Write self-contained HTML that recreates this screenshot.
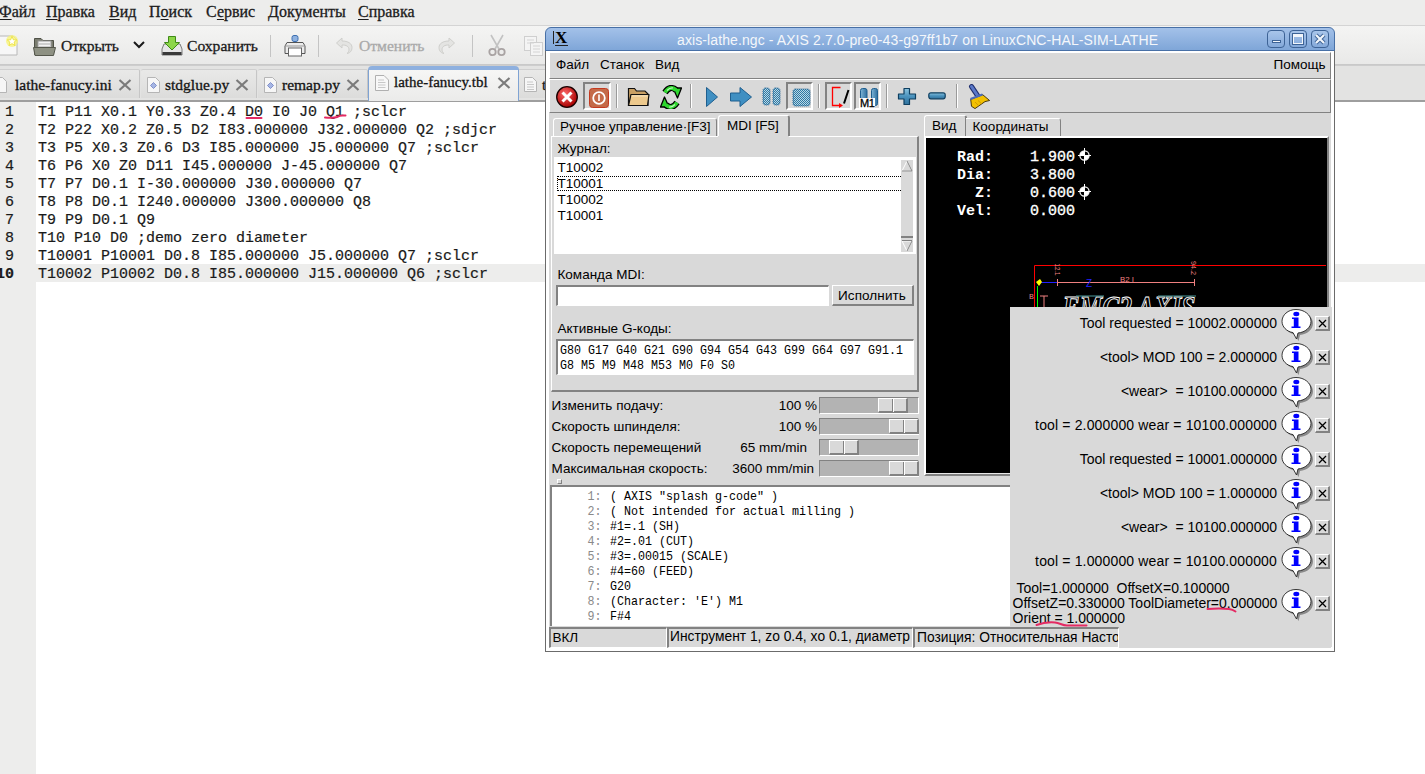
<!DOCTYPE html>
<html><head><meta charset="utf-8">
<style>
*{margin:0;padding:0;box-sizing:border-box}
html,body{width:1425px;height:774px;overflow:hidden;background:#fff}
body{position:relative}
.t{position:absolute;white-space:pre}
.r{position:absolute}
u{text-decoration:underline;text-underline-offset:2px;text-decoration-thickness:1px}
</style></head><body>

<div class="r" style="left:0px;top:0px;width:1425px;height:25px;background:#ededec"></div>
<div class="t" style="left:-1px;top:3.60px;font-family:'Liberation Serif',serif;font-size:16px;line-height:16px;color:#1c1c1c;font-weight:400;;-webkit-text-stroke:0.3px currentColor"><u>Ф</u>айл</div>
<div class="t" style="left:46px;top:3.60px;font-family:'Liberation Serif',serif;font-size:16px;line-height:16px;color:#1c1c1c;font-weight:400;;-webkit-text-stroke:0.3px currentColor"><u>П</u>равка</div>
<div class="t" style="left:109px;top:3.60px;font-family:'Liberation Serif',serif;font-size:16px;line-height:16px;color:#1c1c1c;font-weight:400;;-webkit-text-stroke:0.3px currentColor"><u>В</u>ид</div>
<div class="t" style="left:149px;top:3.60px;font-family:'Liberation Serif',serif;font-size:16px;line-height:16px;color:#1c1c1c;font-weight:400;;-webkit-text-stroke:0.3px currentColor">П<u>о</u>иск</div>
<div class="t" style="left:206px;top:3.60px;font-family:'Liberation Serif',serif;font-size:16px;line-height:16px;color:#1c1c1c;font-weight:400;;-webkit-text-stroke:0.3px currentColor">С<u>е</u>рвис</div>
<div class="t" style="left:268px;top:3.60px;font-family:'Liberation Serif',serif;font-size:16px;line-height:16px;color:#1c1c1c;font-weight:400;;-webkit-text-stroke:0.3px currentColor"><u>Д</u>окументы</div>
<div class="t" style="left:358px;top:3.60px;font-family:'Liberation Serif',serif;font-size:16px;line-height:16px;color:#1c1c1c;font-weight:400;;-webkit-text-stroke:0.3px currentColor"><u>С</u>правка</div>
<div class="r" style="left:0px;top:25px;width:1425px;height:40px;background:linear-gradient(#f4f4f3,#e9e9e8);border-top:1px solid #d4d4d4;border-bottom:1px solid #c9c9c9"></div>
<svg class="r" style="left:0px;top:34px;" width="20" height="24" viewBox="0 0 20 24"><path d="M-2 2 H13 L17 6 V21 H-2 Z" fill="#f7f7f7" stroke="#b8b8b8"/><circle cx="12" cy="7" r="6" fill="#f6f27a" opacity="0.8"/><path d="M12 2.5 L13.3 5.8 L16.6 6 L14 8.2 L14.9 11.5 L12 9.6 L9.1 11.5 L10 8.2 L7.4 6 L10.7 5.8 Z" fill="#fff" stroke="#e8d800" stroke-width="0.6"/></svg>
<svg class="r" style="left:33px;top:35px;" width="24" height="22" viewBox="0 0 24 22"><path d="M1.5 3.5 H8 L10 5.5 H20.5 V19.5 H1.5 Z" fill="#7b7d70" stroke="#4f5147"/><rect x="5" y="6" width="13" height="9" fill="#f2f2f2" stroke="#9a9a9a"/><path d="M6 9H17M6 12H17" stroke="#aaa"/><path d="M0.5 12.5 H22.5 L20.5 20.5 H2 Z" fill="#8e9183" stroke="#55574c"/></svg>
<div class="t" style="left:61px;top:37.94px;font-family:'Liberation Serif',serif;font-size:15.6px;line-height:15.6px;color:#1a1a1a;font-weight:400;;-webkit-text-stroke:0.3px currentColor">Открыть</div>
<svg class="r" style="left:132px;top:40px;" width="14" height="10" viewBox="0 0 14 10"><path d="M2 2 L7 7 L12 2" fill="none" stroke="#1a1a1a" stroke-width="2"/></svg>
<svg class="r" style="left:160px;top:35px;" width="24" height="23" viewBox="0 0 24 23"><path d="M2 14 L4 9 H20 L22 14 V20 H2 Z" fill="#e6e6e6" stroke="#7a7a7a"/><rect x="2.5" y="17" width="19" height="3" fill="#3a3a3a"/><path d="M8.5 1.5 H15.5 V7.5 H19.5 L12 15 L4.5 7.5 H8.5 Z" fill="#8cd648" stroke="#3f8a17"/></svg>
<div class="t" style="left:187px;top:37.94px;font-family:'Liberation Serif',serif;font-size:15.6px;line-height:15.6px;color:#1a1a1a;font-weight:400;;-webkit-text-stroke:0.3px currentColor">Сохранить</div>
<div class="r" style="left:270px;top:35px;width:1px;height:22px;background:#c4c4c4"></div>
<svg class="r" style="left:283px;top:34px;" width="24" height="24" viewBox="0 0 24 24"><rect x="9" y="1.5" width="6" height="6" rx="2" fill="#8fb2e0" stroke="#3c6fb0"/><path d="M4 8.5 H20 L22 12 V19.5 H2 V12 Z" fill="#ececec" stroke="#555"/><rect x="5.5" y="14" width="13" height="8" fill="#fff" stroke="#666"/><path d="M2 12 H22" stroke="#999"/></svg>
<div class="r" style="left:318px;top:35px;width:1px;height:22px;background:#c4c4c4"></div>
<svg class="r" style="left:335px;top:36px;" width="18" height="18" viewBox="0 0 18 18"><path d="M7 2 L1.5 7 L7 12 V9 C11 9 14 10 14 14 C14 15.5 13 17 12 17.5 C16 17 17 13.5 17 11.5 C17 7.5 13 5 7 5 Z" fill="#e4e4e2" stroke="#cfcfcc"/></svg>
<div class="t" style="left:359px;top:37.94px;font-family:'Liberation Serif',serif;font-size:15.6px;line-height:15.6px;color:#a9a9a9;font-weight:400;;-webkit-text-stroke:0.3px currentColor">Отменить</div>
<svg class="r" style="left:438px;top:36px;" width="18" height="18" viewBox="0 0 18 18"><path d="M11 2 L16.5 7 L11 12 V9 C7 9 4 10 4 14 C4 15.5 5 17 6 17.5 C2 17 1 13.5 1 11.5 C1 7.5 5 5 11 5 Z" fill="#e4e4e2" stroke="#cfcfcc"/></svg>
<div class="r" style="left:472px;top:35px;width:1px;height:22px;background:#c4c4c4"></div>
<svg class="r" style="left:487px;top:34px;" width="20" height="23" viewBox="0 0 20 23"><path d="M4 1 L12 15 M16 1 L8 15" stroke="#c2c2c2" stroke-width="1.6" fill="none"/><circle cx="5.5" cy="18" r="3.2" fill="none" stroke="#a9a3a3" stroke-width="1.8"/><circle cx="14.5" cy="18" r="3.2" fill="none" stroke="#a9a3a3" stroke-width="1.8"/></svg>
<svg class="r" style="left:523px;top:35px;" width="22" height="22" viewBox="0 0 22 22"><rect x="1.5" y="1.5" width="12" height="14" fill="#f4f4f4" stroke="#cfcfcf"/><rect x="7.5" y="7.5" width="12" height="13" fill="#f4f4f4" stroke="#cfcfcf"/><path d="M4 5H11M4 8H11M10 11H17M10 14H17M10 17H17" stroke="#d4d4d4"/></svg>
<div class="r" style="left:0px;top:65px;width:1425px;height:37px;background:#e3e3e2;border-top:1px solid #cdcdcd"></div>
<div class="r" style="left:0px;top:100px;width:1425px;height:2px;background:#9e9e9e"></div>
<div class="r" style="left:-12px;top:69px;width:152px;height:29px;background:linear-gradient(#e9e9e8,#dcdcdb);border-top:1px solid #cfcfcf;border-right:1px solid #c6c6c6;border-radius:2px 2px 0 0"></div>
<svg class="r" style="left:-6px;top:77px;" width="13" height="16" viewBox="0 0 13 16"><path d="M0.5 0.5 H8.5 L12.5 4.5 V15.5 H0.5 Z" fill="#f6f6f6" stroke="#b5b5b5"/></svg>
<div class="t" style="left:15px;top:76.52px;font-family:'Liberation Serif',serif;font-size:15.5px;line-height:15.5px;color:#141414;font-weight:400;;-webkit-text-stroke:0.3px currentColor">lathe-fanucy.ini</div>
<svg class="r" style="left:118px;top:79px;" width="14" height="12" viewBox="0 0 14 12"><path d="M1.5 1 L12.5 11 M12.5 1 L1.5 11" stroke="#7b7b7b" stroke-width="2.2"/></svg>
<div class="r" style="left:141px;top:69px;width:116px;height:29px;background:linear-gradient(#e9e9e8,#dcdcdb);border-top:1px solid #cfcfcf;border-right:1px solid #c6c6c6;border-radius:2px 2px 0 0"></div>
<svg class="r" style="left:147px;top:77px;" width="13" height="16" viewBox="0 0 13 16"><path d="M0.5 0.5 H8.5 L12.5 4.5 V15.5 H0.5 Z" fill="#f6f6f6" stroke="#b5b5b5"/><path d="M6.5 5.5 L9.5 8.5 L6.5 11.5 L3.5 8.5 Z" fill="#a6b6e4" stroke="#6f7fc0" stroke-width="0.8"/></svg>
<div class="t" style="left:165px;top:76.52px;font-family:'Liberation Serif',serif;font-size:15.5px;line-height:15.5px;color:#141414;font-weight:400;;-webkit-text-stroke:0.3px currentColor">stdglue.py</div>
<svg class="r" style="left:235px;top:79px;" width="14" height="12" viewBox="0 0 14 12"><path d="M1.5 1 L12.5 11 M12.5 1 L1.5 11" stroke="#7b7b7b" stroke-width="2.2"/></svg>
<div class="r" style="left:258px;top:69px;width:110px;height:29px;background:linear-gradient(#e9e9e8,#dcdcdb);border-top:1px solid #cfcfcf;border-right:1px solid #c6c6c6;border-radius:2px 2px 0 0"></div>
<svg class="r" style="left:264px;top:77px;" width="13" height="16" viewBox="0 0 13 16"><path d="M0.5 0.5 H8.5 L12.5 4.5 V15.5 H0.5 Z" fill="#f6f6f6" stroke="#b5b5b5"/><path d="M6.5 5.5 L9.5 8.5 L6.5 11.5 L3.5 8.5 Z" fill="#a6b6e4" stroke="#6f7fc0" stroke-width="0.8"/></svg>
<div class="t" style="left:282px;top:76.52px;font-family:'Liberation Serif',serif;font-size:15.5px;line-height:15.5px;color:#141414;font-weight:400;;-webkit-text-stroke:0.3px currentColor">remap.py</div>
<svg class="r" style="left:346px;top:79px;" width="14" height="12" viewBox="0 0 14 12"><path d="M1.5 1 L12.5 11 M12.5 1 L1.5 11" stroke="#7b7b7b" stroke-width="2.2"/></svg>
<div class="r" style="left:519px;top:69px;width:40px;height:29px;background:linear-gradient(#e9e9e8,#dcdcdb);border-top:1px solid #cfcfcf"></div>
<svg class="r" style="left:524px;top:77px;" width="13" height="15" viewBox="0 0 13 15"><path d="M0.5 0.5 H8.5 L12.5 4.5 V14.5 H0.5 Z" fill="#f6f6f6" stroke="#b5b5b5"/><path d="M3 5H9M3 7.5H10M3 10H10M3 12.5H10" stroke="#c8c8c8"/></svg>
<div class="t" style="left:542px;top:76.52px;font-family:'Liberation Serif',serif;font-size:15.5px;line-height:15.5px;color:#141414;font-weight:400;;-webkit-text-stroke:0.3px currentColor">t</div>
<div class="r" style="left:368px;top:66px;width:151px;height:35px;background:linear-gradient(#f6f6f5,#ebebea);border:1px solid #7fa3d3;border-bottom:none;border-top:4px solid #8eb0df;border-radius:4px 4px 0 0"></div>
<svg class="r" style="left:375px;top:75px;" width="14" height="16" viewBox="0 0 14 16"><path d="M0.5 0.5 H9 L13.5 5 V15.5 H0.5 Z" fill="#f8f8f8" stroke="#b0b0b0"/><path d="M3 5H9M3 7.5H10.5M3 10H10.5M3 12.5H10.5" stroke="#c8c8c8"/></svg>
<div class="t" style="left:394px;top:75.44px;font-family:'Liberation Serif',serif;font-size:15px;line-height:15px;color:#141414;font-weight:400;;-webkit-text-stroke:0.3px currentColor">lathe-fanucy.tbl</div>
<svg class="r" style="left:497px;top:77px;" width="14" height="12" viewBox="0 0 14 12"><path d="M1.5 1 L12.5 11 M12.5 1 L1.5 11" stroke="#7b7b7b" stroke-width="2.2"/></svg>
<div class="r" style="left:0px;top:102px;width:36px;height:672px;background:#ededec"></div>
<div class="r" style="left:36px;top:264px;width:1389px;height:18px;background:#ededec"></div>
<div class="t" style="right:1411px;top:104.50px;font-family:'Liberation Mono',monospace;font-size:15px;line-height:15px;color:#1a1a1a;font-weight:400;-webkit-text-stroke:0.2px #1a1a1a">1</div>
<div class="t" style="left:38px;top:104.50px;font-family:'Liberation Mono',monospace;font-size:15px;line-height:15px;color:#1a1a1a;font-weight:400;-webkit-text-stroke:0.2px #1a1a1a">T1 P11 X0.1 Y0.33 Z0.4 D0 I0 J0 Q1 ;sclcr</div>
<div class="t" style="right:1411px;top:122.50px;font-family:'Liberation Mono',monospace;font-size:15px;line-height:15px;color:#1a1a1a;font-weight:400;-webkit-text-stroke:0.2px #1a1a1a">2</div>
<div class="t" style="left:38px;top:122.50px;font-family:'Liberation Mono',monospace;font-size:15px;line-height:15px;color:#1a1a1a;font-weight:400;-webkit-text-stroke:0.2px #1a1a1a">T2 P22 X0.2 Z0.5 D2 I83.000000 J32.000000 Q2 ;sdjcr</div>
<div class="t" style="right:1411px;top:140.50px;font-family:'Liberation Mono',monospace;font-size:15px;line-height:15px;color:#1a1a1a;font-weight:400;-webkit-text-stroke:0.2px #1a1a1a">3</div>
<div class="t" style="left:38px;top:140.50px;font-family:'Liberation Mono',monospace;font-size:15px;line-height:15px;color:#1a1a1a;font-weight:400;-webkit-text-stroke:0.2px #1a1a1a">T3 P5 X0.3 Z0.6 D3 I85.000000 J5.000000 Q7 ;sclcr</div>
<div class="t" style="right:1411px;top:158.50px;font-family:'Liberation Mono',monospace;font-size:15px;line-height:15px;color:#1a1a1a;font-weight:400;-webkit-text-stroke:0.2px #1a1a1a">4</div>
<div class="t" style="left:38px;top:158.50px;font-family:'Liberation Mono',monospace;font-size:15px;line-height:15px;color:#1a1a1a;font-weight:400;-webkit-text-stroke:0.2px #1a1a1a">T6 P6 X0 Z0 D11 I45.000000 J-45.000000 Q7</div>
<div class="t" style="right:1411px;top:176.50px;font-family:'Liberation Mono',monospace;font-size:15px;line-height:15px;color:#1a1a1a;font-weight:400;-webkit-text-stroke:0.2px #1a1a1a">5</div>
<div class="t" style="left:38px;top:176.50px;font-family:'Liberation Mono',monospace;font-size:15px;line-height:15px;color:#1a1a1a;font-weight:400;-webkit-text-stroke:0.2px #1a1a1a">T7 P7 D0.1 I-30.000000 J30.000000 Q7</div>
<div class="t" style="right:1411px;top:194.50px;font-family:'Liberation Mono',monospace;font-size:15px;line-height:15px;color:#1a1a1a;font-weight:400;-webkit-text-stroke:0.2px #1a1a1a">6</div>
<div class="t" style="left:38px;top:194.50px;font-family:'Liberation Mono',monospace;font-size:15px;line-height:15px;color:#1a1a1a;font-weight:400;-webkit-text-stroke:0.2px #1a1a1a">T8 P8 D0.1 I240.000000 J300.000000 Q8</div>
<div class="t" style="right:1411px;top:212.50px;font-family:'Liberation Mono',monospace;font-size:15px;line-height:15px;color:#1a1a1a;font-weight:400;-webkit-text-stroke:0.2px #1a1a1a">7</div>
<div class="t" style="left:38px;top:212.50px;font-family:'Liberation Mono',monospace;font-size:15px;line-height:15px;color:#1a1a1a;font-weight:400;-webkit-text-stroke:0.2px #1a1a1a">T9 P9 D0.1 Q9</div>
<div class="t" style="right:1411px;top:230.50px;font-family:'Liberation Mono',monospace;font-size:15px;line-height:15px;color:#1a1a1a;font-weight:400;-webkit-text-stroke:0.2px #1a1a1a">8</div>
<div class="t" style="left:38px;top:230.50px;font-family:'Liberation Mono',monospace;font-size:15px;line-height:15px;color:#1a1a1a;font-weight:400;-webkit-text-stroke:0.2px #1a1a1a">T10 P10 D0 ;demo zero diameter</div>
<div class="t" style="right:1411px;top:248.50px;font-family:'Liberation Mono',monospace;font-size:15px;line-height:15px;color:#1a1a1a;font-weight:400;-webkit-text-stroke:0.2px #1a1a1a">9</div>
<div class="t" style="left:38px;top:248.50px;font-family:'Liberation Mono',monospace;font-size:15px;line-height:15px;color:#1a1a1a;font-weight:400;-webkit-text-stroke:0.2px #1a1a1a">T10001 P10001 D0.8 I85.000000 J5.000000 Q7 ;sclcr</div>
<div class="t" style="right:1411px;top:266.50px;font-family:'Liberation Mono',monospace;font-size:15px;line-height:15px;color:#1a1a1a;font-weight:700;-webkit-text-stroke:0.2px #1a1a1a">10</div>
<div class="t" style="left:38px;top:266.50px;font-family:'Liberation Mono',monospace;font-size:15px;line-height:15px;color:#1a1a1a;font-weight:400;-webkit-text-stroke:0.2px #1a1a1a">T10002 P10002 D0.8 I85.000000 J15.000000 Q6 ;sclcr</div>
<svg class="r" style="left:244px;top:115px;" width="22" height="6" viewBox="0 0 22 6"><path d="M2.5 3 H17.5" stroke="#e42a63" stroke-width="2" stroke-linecap="round"/></svg>
<svg class="r" style="left:322px;top:112px;" width="26" height="8" viewBox="0 0 26 8"><path d="M3 5.5 C8 6 12 6 15 5 C17 4 19 3.5 21 3.6 C22 3.7 23 3.5 23.5 3.5" stroke="#e42a63" stroke-width="2" stroke-linecap="round" fill="none"/></svg>
<div class="r" style="left:545px;top:50px;width:790px;height:602px;background:#fff;border:1px solid #6b6b6b;border-top:none"></div>
<div class="r" style="left:549px;top:52px;width:782px;height:596px;background:#d9d9d9"></div>
<div class="r" style="left:545px;top:27px;width:790px;height:24px;background:linear-gradient(#a3c1e9,#7fa6d8);border:1px solid #4870a6;border-radius:6px 6px 0 0"></div>
<div class="t" style="left:555px;top:30px;font-family:'Liberation Serif',serif;font-weight:700;font-size:17px;line-height:15px;color:#000">X</div>
<div class="r" style="left:553px;top:31px;width:1px;height:13px;background:#222"></div>
<div class="r" style="left:555px;top:45px;width:13px;height:1px;background:#222"></div>
<div class="t" style="left:677px;top:32.65px;font-family:'Liberation Sans',sans-serif;font-size:14px;line-height:14px;color:#f4f7fb;font-weight:400;letter-spacing:0.1px">axis-lathe.ngc - AXIS 2.7.0-pre0-43-g97ff1b7 on LinuxCNC-HAL-SIM-LATHE</div>
<div class="r" style="left:1267px;top:30px;width:18px;height:18px;border:1px solid #3d6396;border-radius:4px;background:linear-gradient(#a8c5ea,#84a9da)"></div>
<div class="r" style="left:1289px;top:30px;width:18px;height:18px;border:1px solid #3d6396;border-radius:4px;background:linear-gradient(#a8c5ea,#84a9da)"></div>
<div class="r" style="left:1311px;top:30px;width:18px;height:18px;border:1px solid #3d6396;border-radius:4px;background:linear-gradient(#a8c5ea,#84a9da)"></div>
<div class="r" style="left:1272px;top:40px;width:9px;height:3px;background:#f2f6fb;border:1px solid #3d6396"></div>
<div class="r" style="left:1293px;top:34px;width:10px;height:10px;border-style:solid;border-color:#f2f6fb;border-width:3px 1px 1px 1px;outline:1px solid #3d6396;background:transparent"></div>
<svg class="r" style="left:1313px;top:32px;" width="14" height="14" viewBox="0 0 14 14"><path d="M3 3 L11 11 M11 3 L3 11" stroke="#3d6396" stroke-width="4"/><path d="M3 3 L11 11 M11 3 L3 11" stroke="#f2f6fb" stroke-width="2.2"/></svg>
<div class="r" style="left:549px;top:52px;width:782px;height:27px;background:#d9d9d9;border-style:solid;border-width:1px;border-color:#fff #828282 #828282 #fff"></div>
<div class="t" style="left:556px;top:57.57px;font-family:'Liberation Sans',sans-serif;font-size:13.5px;line-height:13.5px;color:#000;font-weight:400;">Файл</div>
<div class="t" style="left:600px;top:57.57px;font-family:'Liberation Sans',sans-serif;font-size:13.5px;line-height:13.5px;color:#000;font-weight:400;">Станок</div>
<div class="t" style="left:655px;top:57.57px;font-family:'Liberation Sans',sans-serif;font-size:13.5px;line-height:13.5px;color:#000;font-weight:400;">Вид</div>
<div class="t" style="left:1273.5px;top:58.07px;font-family:'Liberation Sans',sans-serif;font-size:13.5px;line-height:13.5px;color:#000;font-weight:400;">Помощь</div>
<div class="r" style="left:549px;top:79px;width:782px;height:34px;background:#d9d9d9;border-style:solid;border-width:1px;border-color:#fff #828282 #828282 #fff"></div>
<div class="r" style="left:583px;top:82px;width:28px;height:28px;border-style:solid;border-width:2px;border-color:#828282 #fff #fff #828282"></div>
<div class="r" style="left:786px;top:82px;width:27px;height:28px;border-style:solid;border-width:2px;border-color:#828282 #fff #fff #828282"></div>
<div class="r" style="left:825px;top:82px;width:27px;height:28px;border-style:solid;border-width:2px;border-color:#828282 #fff #fff #828282"></div>
<div class="r" style="left:854px;top:82px;width:27px;height:28px;border-style:solid;border-width:2px;border-color:#828282 #fff #fff #828282"></div>
<div class="r" style="left:616px;top:84px;width:1px;height:24px;background:#9a9a9a;box-shadow:1px 0 0 #fff"></div>
<div class="r" style="left:690px;top:84px;width:1px;height:24px;background:#9a9a9a;box-shadow:1px 0 0 #fff"></div>
<div class="r" style="left:818px;top:84px;width:1px;height:24px;background:#9a9a9a;box-shadow:1px 0 0 #fff"></div>
<div class="r" style="left:886px;top:84px;width:1px;height:24px;background:#9a9a9a;box-shadow:1px 0 0 #fff"></div>
<div class="r" style="left:956px;top:84px;width:1px;height:24px;background:#9a9a9a;box-shadow:1px 0 0 #fff"></div>
<svg class="r" style="left:556px;top:86px;" width="22" height="22" viewBox="0 0 22 22"><defs><radialGradient id="rg" cx="40%" cy="35%" r="65%"><stop offset="0" stop-color="#ff6b6b"/><stop offset="1" stop-color="#a80000"/></radialGradient></defs><circle cx="11" cy="11" r="10.3" fill="url(#rg)" stroke="#1a0000" stroke-width="1.3"/><path d="M6.5 6.5 L15.5 15.5 M15.5 6.5 L6.5 15.5" stroke="#fff" stroke-width="3"/></svg>
<svg class="r" style="left:589px;top:88px;" width="20" height="20" viewBox="0 0 20 20"><rect x="0.5" y="0.5" width="19" height="19" rx="3" fill="#c46a48" stroke="#c43a20"/><circle cx="10" cy="10" r="5.8" fill="none" stroke="#fff" stroke-width="1.8"/><path d="M10 6.5 V13" stroke="#fff" stroke-width="1.6"/></svg>
<svg class="r" style="left:627px;top:87px;" width="24" height="20" viewBox="0 0 24 20"><path d="M1.5 1.5 H7.5 L9.5 4 H18 L21 7 V18.5 H1.5 Z" fill="#c9a064" stroke="#111" stroke-width="1.2"/><path d="M4 7.5 H22 L20.5 18.5 H1.5 Z" fill="#edc98d" stroke="#111" stroke-width="1.2" stroke-linejoin="round"/><path d="M4.5 9 H20.5" stroke="#f8e6c4" stroke-width="1"/></svg>
<svg class="r" style="left:660px;top:85px;" width="22" height="24" viewBox="0 0 22 24"><g><path d="M5 7.5 Q10 0 16 5" stroke="#000" stroke-width="6.2" fill="none"/><path d="M13 3 L21.5 3 L17.5 13 Z" fill="#2fd82f" stroke="#000" stroke-width="1.3" stroke-linejoin="round"/><path d="M5 7.5 Q10 0 16 5" stroke="#2fd82f" stroke-width="3.8" fill="none"/><path d="M7 5.5 Q10 2.5 13 3" stroke="#b8f5b8" stroke-width="1.2" fill="none"/></g><g transform="rotate(180 11 12.5)"><path d="M5 7.5 Q10 0 16 5" stroke="#000" stroke-width="6.2" fill="none"/><path d="M13 3 L21.5 3 L17.5 13 Z" fill="#2fd82f" stroke="#000" stroke-width="1.3" stroke-linejoin="round"/><path d="M5 7.5 Q10 0 16 5" stroke="#2fd82f" stroke-width="3.8" fill="none"/><path d="M7 5.5 Q10 2.5 13 3" stroke="#b8f5b8" stroke-width="1.2" fill="none"/></g></svg>
<svg class="r" style="left:705px;top:86px;" width="14" height="22" viewBox="0 0 14 22"><path d="M1.5 1.5 L12.5 11 L1.5 20.5 Z" fill="#3f8fc2" stroke="#1f5f8f"/></svg>
<svg class="r" style="left:729px;top:86px;" width="24" height="22" viewBox="0 0 24 22"><path d="M1.5 7 H11 V1.5 L22.5 11 L11 20.5 V15 H1.5 Z" fill="#3f8fc2" stroke="#1f5f8f"/></svg>
<svg class="r" style="left:762px;top:87px;" width="19" height="19" viewBox="0 0 19 19"><defs><pattern id="dp" width="2" height="2" patternUnits="userSpaceOnUse"><rect width="2" height="2" fill="#b9d9e6"/><rect width="1" height="1" fill="#2f77a3"/><rect x="1" y="1" width="1" height="1" fill="#2f77a3"/></pattern></defs><rect x="1" y="1" width="7" height="17" rx="2.5" fill="url(#dp)" stroke="#1f5f8f" stroke-dasharray="1 1"/><rect x="11" y="1" width="7" height="17" rx="2.5" fill="url(#dp)" stroke="#1f5f8f" stroke-dasharray="1 1"/></svg>
<svg class="r" style="left:792px;top:88px;" width="19" height="19" viewBox="0 0 19 19"><rect x="1" y="1" width="17" height="17" rx="2.5" fill="url(#dp)" stroke="#1f5f8f" stroke-dasharray="1 1"/></svg>
<svg class="r" style="left:826px;top:84px;" width="24" height="24" viewBox="0 0 24 24"><path d="M14.5 3.5 H6.5 V21.5 H14" stroke="#ff0000" stroke-width="1.3" fill="none"/><path d="M13 19 L17 21.5 L13 24 Z" fill="#f00"/><path d="M22.5 6 L18 19.5" stroke="#000" stroke-width="2"/></svg>
<svg class="r" style="left:857px;top:84px;" width="22" height="24" viewBox="0 0 22 24"><defs><linearGradient id="bg1" x1="0" x2="1"><stop offset="0" stop-color="#7fb5d6"/><stop offset="1" stop-color="#2f6f9f"/></linearGradient></defs><rect x="3.5" y="4.5" width="6.5" height="17" rx="2" fill="url(#bg1)" stroke="#1f5f8f"/><rect x="14.5" y="4.5" width="6" height="17" rx="2" fill="url(#bg1)" stroke="#1f5f8f"/></svg>
<div class="t" style="left:859px;top:97.5px;font-family:'Liberation Sans',sans-serif;font-size:11px;line-height:10px;font-weight:400;background:#fff;padding:0 0 0 1px;letter-spacing:-0.3px;-webkit-text-stroke:0.3px #000">M1</div>
<svg class="r" style="left:897px;top:87px;" width="20" height="19" viewBox="0 0 20 19"><defs><linearGradient id="bl" x1="0" y1="0" x2="0" y2="1"><stop offset="0" stop-color="#8cc4df"/><stop offset="0.5" stop-color="#4a92bd"/><stop offset="1" stop-color="#2f719c"/></linearGradient></defs><path d="M7 1.5 H12.5 V7 H18.5 V12 H12.5 V17.5 H7 V12 H1.5 V7 H7 Z" fill="url(#bl)" stroke="#0f3f60" stroke-width="1.2" stroke-linejoin="round"/></svg>
<svg class="r" style="left:928px;top:92px;" width="20" height="8" viewBox="0 0 20 8"><rect x="0.8" y="0.8" width="16.4" height="6" rx="2" fill="url(#bl)" stroke="#0f3f60" stroke-width="1.2"/></svg>
<svg class="r" style="left:968px;top:84px;" width="24" height="26" viewBox="0 0 24 26"><path d="M3.5 2.5 L9.5 11.5" stroke="#1f2f6f" stroke-width="5" stroke-linecap="round"/><path d="M3.5 2.5 L9.5 11.5" stroke="#5a78c8" stroke-width="3" stroke-linecap="round"/><path d="M2.7 15.3 L14.7 10.7 L21.6 16.5 L17 17.6 L7 24.6 L3.5 22.3 Z" fill="#f2c000" stroke="#3a2a00" stroke-width="0.9" stroke-linejoin="round"/><path d="M2.5 15 L14.5 10.5" stroke="#4a6ab8" stroke-width="2"/><path d="M7 18 L11 22 M10 16.5 L14 20" stroke="#c89000" stroke-width="0.8"/></svg>
<div class="r" style="left:553px;top:118px;width:164px;height:18px;background:#d9d9d9;border-style:solid;border-width:1px 1px 0 1px;border-color:#fff #828282 #fff #fff;border-radius:3px 3px 0 0"></div>
<div class="t" style="left:560px;top:120.07px;font-family:'Liberation Sans',sans-serif;font-size:13.5px;line-height:13.5px;color:#000;font-weight:400;">Ручное управление·[F3]</div>
<div class="r" style="left:718px;top:115px;width:72px;height:22px;background:#d9d9d9;border-style:solid;border-width:1px 2px 0 1px;border-color:#fff #828282 #fff #fff;border-radius:3px 3px 0 0"></div>
<div class="t" style="left:727px;top:118.57px;font-family:'Liberation Sans',sans-serif;font-size:13.5px;line-height:13.5px;color:#000;font-weight:400;">MDI [F5]</div>
<div class="r" style="left:551px;top:136px;width:368px;height:256px;border-style:solid;border-width:1px 2px 2px 1px;border-color:#fff #828282 #828282 #fff"></div>
<div class="r" style="left:718px;top:136px;width:71px;height:2px;background:#d9d9d9"></div>
<div class="t" style="left:557.5px;top:141.77px;font-family:'Liberation Sans',sans-serif;font-size:13.5px;line-height:13.5px;color:#000;font-weight:400;">Журнал:</div>
<div class="r" style="left:554px;top:157px;width:362px;height:97px;background:#fff"></div>
<div class="t" style="left:557.5px;top:160.97px;font-family:'Liberation Sans',sans-serif;font-size:13.5px;line-height:13.5px;color:#000;font-weight:400;">T10002</div>
<div class="t" style="left:557.5px;top:176.97px;font-family:'Liberation Sans',sans-serif;font-size:13.5px;line-height:13.5px;color:#000;font-weight:400;">T10001</div>
<div class="t" style="left:557.5px;top:192.97px;font-family:'Liberation Sans',sans-serif;font-size:13.5px;line-height:13.5px;color:#000;font-weight:400;">T10002</div>
<div class="t" style="left:557.5px;top:208.97px;font-family:'Liberation Sans',sans-serif;font-size:13.5px;line-height:13.5px;color:#000;font-weight:400;">T10001</div>
<div class="r" style="left:557px;top:176px;width:344px;height:15px;border-top:1px dotted #000;border-bottom:1px dotted #000"></div>
<div class="r" style="left:557px;top:176px;width:1px;height:15px;border-left:1px dotted #000"></div>
<div class="r" style="left:901px;top:160px;width:12px;height:92px;background:#d9d9d9"></div>
<svg class="r" style="left:901px;top:160px;" width="12" height="12" viewBox="0 0 12 12"><path d="M6 1 L11 11 H1 Z" fill="#d9d9d9" stroke="#fff"/><path d="M1 11 H11 L6 1" fill="none" stroke="#828282"/></svg>
<svg class="r" style="left:901px;top:240px;" width="12" height="12" viewBox="0 0 12 12"><path d="M6 11 L11 1 H1 Z" fill="#d9d9d9" stroke="#fff"/><path d="M6 11 L11 1" fill="none" stroke="#828282"/><path d="M1 0.5 H11" stroke="#828282"/></svg>
<div class="r" style="left:901px;top:236px;width:12px;height:2px;background:#828282"></div>
<div class="t" style="left:557.5px;top:268.07px;font-family:'Liberation Sans',sans-serif;font-size:13.5px;line-height:13.5px;color:#000;font-weight:400;">Команда MDI:</div>
<div class="r" style="left:556px;top:285px;width:273px;height:21px;background:#fff;border-style:solid;border-width:2px 1px 1px 2px;border-color:#828282 #fff #fff #828282"></div>
<div class="r" style="left:832px;top:285px;width:82px;height:21px;background:#d9d9d9;border-style:solid;border-width:1px 2px 2px 1px;border-color:#fff #828282 #828282 #fff"></div>
<div class="t" style="left:838px;top:289.07px;font-family:'Liberation Sans',sans-serif;font-size:13.5px;line-height:13.5px;color:#000;font-weight:400;letter-spacing:0.1px">Исполнить</div>
<div class="t" style="left:557.5px;top:321.57px;font-family:'Liberation Sans',sans-serif;font-size:13.5px;line-height:13.5px;color:#000;font-weight:400;">Активные G-коды:</div>
<div class="r" style="left:556px;top:339px;width:358px;height:36px;background:#fff;border-style:solid;border-width:2px 1px 1px 2px;border-color:#828282 #fff #fff #828282"></div>
<div class="t" style="left:559.5px;top:344.04px;font-family:'Liberation Mono',monospace;font-size:13px;line-height:13px;color:#000;font-weight:400;;transform:scaleX(0.8974358974358975);transform-origin:left top">G80 G17 G40 G21 G90 G94 G54 G43 G99 G64 G97 G91.1</div>
<div class="t" style="left:559.5px;top:359.04px;font-family:'Liberation Mono',monospace;font-size:13px;line-height:13px;color:#000;font-weight:400;;transform:scaleX(0.8974358974358975);transform-origin:left top">G8 M5 M9 M48 M53 M0 F0 S0</div>
<div class="t" style="left:551.5px;top:399.07px;font-family:'Liberation Sans',sans-serif;font-size:13.5px;line-height:13.5px;color:#000;font-weight:400;">Изменить подачу:</div>
<div class="t" style="right:608px;top:399.07px;font-family:'Liberation Sans',sans-serif;font-size:13.5px;line-height:13.5px;color:#000;font-weight:400;">100 %</div>
<div class="r" style="left:819px;top:397px;width:100px;height:17px;background:#b3b3b3;border-style:solid;border-width:1px;border-color:#828282 #fff #fff #828282"></div>
<div class="r" style="left:878px;top:398px;width:30px;height:15px;background:#d9d9d9;border-style:solid;border-width:1px 2px 2px 1px;border-color:#fff #828282 #828282 #fff"></div>
<div class="r" style="left:892px;top:399px;width:1px;height:13px;background:#828282;box-shadow:1px 0 0 #fff"></div>
<div class="t" style="left:551.5px;top:419.77px;font-family:'Liberation Sans',sans-serif;font-size:13.5px;line-height:13.5px;color:#000;font-weight:400;">Скорость шпинделя:</div>
<div class="t" style="right:608px;top:419.77px;font-family:'Liberation Sans',sans-serif;font-size:13.5px;line-height:13.5px;color:#000;font-weight:400;">100 %</div>
<div class="r" style="left:819px;top:418px;width:100px;height:17px;background:#b3b3b3;border-style:solid;border-width:1px;border-color:#828282 #fff #fff #828282"></div>
<div class="r" style="left:889px;top:419px;width:30px;height:15px;background:#d9d9d9;border-style:solid;border-width:1px 2px 2px 1px;border-color:#fff #828282 #828282 #fff"></div>
<div class="r" style="left:903px;top:420px;width:1px;height:13px;background:#828282;box-shadow:1px 0 0 #fff"></div>
<div class="t" style="left:551.5px;top:440.57px;font-family:'Liberation Sans',sans-serif;font-size:13.5px;line-height:13.5px;color:#000;font-weight:400;">Скорость перемещений</div>
<div class="t" style="right:618px;top:440.57px;font-family:'Liberation Sans',sans-serif;font-size:13.5px;line-height:13.5px;color:#000;font-weight:400;">65 mm/min</div>
<div class="r" style="left:819px;top:439px;width:100px;height:17px;background:#b3b3b3;border-style:solid;border-width:1px;border-color:#828282 #fff #fff #828282"></div>
<div class="r" style="left:829px;top:440px;width:30px;height:15px;background:#d9d9d9;border-style:solid;border-width:1px 2px 2px 1px;border-color:#fff #828282 #828282 #fff"></div>
<div class="r" style="left:843px;top:441px;width:1px;height:13px;background:#828282;box-shadow:1px 0 0 #fff"></div>
<div class="t" style="left:551.5px;top:461.57px;font-family:'Liberation Sans',sans-serif;font-size:13.5px;line-height:13.5px;color:#000;font-weight:400;">Максимальная скорость:</div>
<div class="t" style="right:611px;top:461.57px;font-family:'Liberation Sans',sans-serif;font-size:13.5px;line-height:13.5px;color:#000;font-weight:400;">3600 mm/min</div>
<div class="r" style="left:819px;top:460px;width:100px;height:17px;background:#b3b3b3;border-style:solid;border-width:1px;border-color:#828282 #fff #fff #828282"></div>
<div class="r" style="left:889px;top:461px;width:30px;height:15px;background:#d9d9d9;border-style:solid;border-width:1px 2px 2px 1px;border-color:#fff #828282 #828282 #fff"></div>
<div class="r" style="left:903px;top:462px;width:1px;height:13px;background:#828282;box-shadow:1px 0 0 #fff"></div>
<div class="r" style="left:557px;top:479px;width:5px;height:5px;border-style:solid;border-width:1px;border-color:#fff #828282 #828282 #fff;background:#d9d9d9"></div>
<div class="r" style="left:550px;top:485px;width:470px;height:141px;background:#fff;border-style:solid;border-width:2px 0 0 2px;border-color:#828282"></div>
<div class="t" style="right:823px;top:489.54px;font-family:'Liberation Mono',monospace;font-size:13px;line-height:13px;color:#8a8a8a;font-weight:400;;transform:scaleX(0.8974358974358975);transform-origin:right top">1:</div>
<div class="t" style="left:610px;top:489.54px;font-family:'Liberation Mono',monospace;font-size:13px;line-height:13px;color:#000;font-weight:400;;transform:scaleX(0.8974358974358975);transform-origin:left top">( AXIS "splash g-code" )</div>
<div class="t" style="right:823px;top:504.54px;font-family:'Liberation Mono',monospace;font-size:13px;line-height:13px;color:#8a8a8a;font-weight:400;;transform:scaleX(0.8974358974358975);transform-origin:right top">2:</div>
<div class="t" style="left:610px;top:504.54px;font-family:'Liberation Mono',monospace;font-size:13px;line-height:13px;color:#000;font-weight:400;;transform:scaleX(0.8974358974358975);transform-origin:left top">( Not intended for actual milling )</div>
<div class="t" style="right:823px;top:519.54px;font-family:'Liberation Mono',monospace;font-size:13px;line-height:13px;color:#8a8a8a;font-weight:400;;transform:scaleX(0.8974358974358975);transform-origin:right top">3:</div>
<div class="t" style="left:610px;top:519.54px;font-family:'Liberation Mono',monospace;font-size:13px;line-height:13px;color:#000;font-weight:400;;transform:scaleX(0.8974358974358975);transform-origin:left top">#1=.1 (SH)</div>
<div class="t" style="right:823px;top:534.54px;font-family:'Liberation Mono',monospace;font-size:13px;line-height:13px;color:#8a8a8a;font-weight:400;;transform:scaleX(0.8974358974358975);transform-origin:right top">4:</div>
<div class="t" style="left:610px;top:534.54px;font-family:'Liberation Mono',monospace;font-size:13px;line-height:13px;color:#000;font-weight:400;;transform:scaleX(0.8974358974358975);transform-origin:left top">#2=.01 (CUT)</div>
<div class="t" style="right:823px;top:549.54px;font-family:'Liberation Mono',monospace;font-size:13px;line-height:13px;color:#8a8a8a;font-weight:400;;transform:scaleX(0.8974358974358975);transform-origin:right top">5:</div>
<div class="t" style="left:610px;top:549.54px;font-family:'Liberation Mono',monospace;font-size:13px;line-height:13px;color:#000;font-weight:400;;transform:scaleX(0.8974358974358975);transform-origin:left top">#3=.00015 (SCALE)</div>
<div class="t" style="right:823px;top:564.54px;font-family:'Liberation Mono',monospace;font-size:13px;line-height:13px;color:#8a8a8a;font-weight:400;;transform:scaleX(0.8974358974358975);transform-origin:right top">6:</div>
<div class="t" style="left:610px;top:564.54px;font-family:'Liberation Mono',monospace;font-size:13px;line-height:13px;color:#000;font-weight:400;;transform:scaleX(0.8974358974358975);transform-origin:left top">#4=60 (FEED)</div>
<div class="t" style="right:823px;top:579.54px;font-family:'Liberation Mono',monospace;font-size:13px;line-height:13px;color:#8a8a8a;font-weight:400;;transform:scaleX(0.8974358974358975);transform-origin:right top">7:</div>
<div class="t" style="left:610px;top:579.54px;font-family:'Liberation Mono',monospace;font-size:13px;line-height:13px;color:#000;font-weight:400;;transform:scaleX(0.8974358974358975);transform-origin:left top">G20</div>
<div class="t" style="right:823px;top:594.54px;font-family:'Liberation Mono',monospace;font-size:13px;line-height:13px;color:#8a8a8a;font-weight:400;;transform:scaleX(0.8974358974358975);transform-origin:right top">8:</div>
<div class="t" style="left:610px;top:594.54px;font-family:'Liberation Mono',monospace;font-size:13px;line-height:13px;color:#000;font-weight:400;;transform:scaleX(0.8974358974358975);transform-origin:left top">(Character: 'E') M1</div>
<div class="t" style="right:823px;top:609.54px;font-family:'Liberation Mono',monospace;font-size:13px;line-height:13px;color:#8a8a8a;font-weight:400;;transform:scaleX(0.8974358974358975);transform-origin:right top">9:</div>
<div class="t" style="left:610px;top:609.54px;font-family:'Liberation Mono',monospace;font-size:13px;line-height:13px;color:#000;font-weight:400;;transform:scaleX(0.8974358974358975);transform-origin:left top">F#4</div>
<div class="r" style="left:924px;top:115px;width:43px;height:22px;background:#d9d9d9;border-style:solid;border-width:1px 2px 0 1px;border-color:#fff #828282 #fff #fff;border-radius:3px 3px 0 0"></div>
<div class="t" style="left:932px;top:118.57px;font-family:'Liberation Sans',sans-serif;font-size:13.5px;line-height:13.5px;color:#000;font-weight:400;">Вид</div>
<div class="r" style="left:966px;top:118px;width:95px;height:19px;background:#d9d9d9;border-style:solid;border-width:1px 1px 0 0;border-color:#fff #828282 #fff #fff;border-radius:0 3px 0 0"></div>
<div class="t" style="left:972.5px;top:120.07px;font-family:'Liberation Sans',sans-serif;font-size:13.5px;line-height:13.5px;color:#000;font-weight:400;">Координаты</div>
<div class="r" style="left:924px;top:136px;width:405px;height:340px;background:#000;border-style:solid;border-width:2px;border-color:#fff #828282 #828282 #fff"></div>
<div class="r" style="left:926px;top:473px;width:401px;height:1px;background:#e8e8e8"></div>
<div class="t" style="left:957px;top:149.50px;font-family:'Liberation Mono',monospace;font-size:15px;line-height:15px;color:#fff;font-weight:700;">Rad:</div>
<div class="t" style="left:1030px;top:149.50px;font-family:'Liberation Mono',monospace;font-size:15px;line-height:15px;color:#fff;font-weight:400;-webkit-text-stroke:0.35px #fff">1.900</div>
<svg class="r" style="left:1077px;top:148px;" width="15" height="16" viewBox="0 0 15 16"><circle cx="7.5" cy="7.5" r="4.6" fill="#000" stroke="#fff" stroke-width="1.2"/><path d="M7.5 7.5 V2.9 A4.6 4.6 0 0 0 2.9 7.5 Z M7.5 7.5 V12.1 A4.6 4.6 0 0 0 12.1 7.5 Z" fill="#fff"/><path d="M7.5 0 V16 M1 7.5 H14" stroke="#fff" stroke-width="1"/></svg>
<div class="t" style="left:957px;top:167.50px;font-family:'Liberation Mono',monospace;font-size:15px;line-height:15px;color:#fff;font-weight:700;">Dia:</div>
<div class="t" style="left:1030px;top:167.50px;font-family:'Liberation Mono',monospace;font-size:15px;line-height:15px;color:#fff;font-weight:400;-webkit-text-stroke:0.35px #fff">3.800</div>
<div class="t" style="left:957px;top:185.50px;font-family:'Liberation Mono',monospace;font-size:15px;line-height:15px;color:#fff;font-weight:700;">  Z:</div>
<div class="t" style="left:1030px;top:185.50px;font-family:'Liberation Mono',monospace;font-size:15px;line-height:15px;color:#fff;font-weight:400;-webkit-text-stroke:0.35px #fff">0.600</div>
<svg class="r" style="left:1077px;top:184px;" width="15" height="16" viewBox="0 0 15 16"><circle cx="7.5" cy="7.5" r="4.6" fill="#000" stroke="#fff" stroke-width="1.2"/><path d="M7.5 7.5 V2.9 A4.6 4.6 0 0 0 2.9 7.5 Z M7.5 7.5 V12.1 A4.6 4.6 0 0 0 12.1 7.5 Z" fill="#fff"/><path d="M7.5 0 V16 M1 7.5 H14" stroke="#fff" stroke-width="1"/></svg>
<div class="t" style="left:957px;top:203.50px;font-family:'Liberation Mono',monospace;font-size:15px;line-height:15px;color:#fff;font-weight:700;">Vel:</div>
<div class="t" style="left:1030px;top:203.50px;font-family:'Liberation Mono',monospace;font-size:15px;line-height:15px;color:#fff;font-weight:400;-webkit-text-stroke:0.35px #fff">0.000</div>
<svg class="r" style="left:926px;top:138px;" width="400" height="169" viewBox="0 0 400 169">
<path d="M108.5 169 V127.5 H400" stroke="#f00" stroke-width="1" fill="none"/>
<path d="M115 144.5 H131" stroke="#2020ff" stroke-width="1"/>
<path d="M131 144.5 H268.5 M131.5 141 V148 M268.5 141 V148" stroke="#f08080" stroke-width="1"/>
<path d="M111.5 148 V169" stroke="#00ff00" stroke-width="1"/>
<path d="M110 144 L114 141 L116 144 L113 148 Z" fill="#ffff00"/>
<text transform="translate(129,125.5) rotate(90)" font-family="Liberation Sans" font-size="7.5" fill="#f08080" textLength="12" lengthAdjust="spacingAndGlyphs">12.1</text>
<text transform="translate(265,123) rotate(90)" font-family="Liberation Sans" font-size="7.5" fill="#f08080" textLength="14" lengthAdjust="spacingAndGlyphs">94.2</text>
<text x="194" y="143.5" font-family="Liberation Sans" font-size="8" fill="#f08080" textLength="14" lengthAdjust="spacingAndGlyphs">B2 I</text>
<text x="160" y="149" font-family="Liberation Sans" font-size="10" fill="#2020ff">Z</text>
<text x="103" y="161" font-family="Liberation Mono" font-size="8" fill="#f08080">B</text>
<path d="M114 158 H122 M118 158 V169" stroke="#f08080" stroke-width="1"/>
<text x="136.5" y="181" font-family="Liberation Serif" font-style="italic" font-weight="700" font-size="33" fill="none" stroke="#fff" stroke-width="1" textLength="133" lengthAdjust="spacingAndGlyphs">EMC2 AXIS</text>
<path d="M150 158 H178 M232 158 H270" stroke="#4a9a9a" stroke-width="1"/>
</svg>
<div class="r" style="left:1010px;top:307px;width:322px;height:340px;background:#d9d9d9"></div>
<div class="t" style="right:148px;top:315.65px;font-family:'Liberation Sans',sans-serif;font-size:14px;line-height:14px;color:#000;font-weight:400;">Tool requested = 10002.000000</div>
<svg class="r" style="left:1281px;top:308px;" width="34" height="34" viewBox="0 0 34 34"><path d="M15 1.5 C23.5 1.5 30 7 30 13.3 C30 19.6 24 24.4 17 25 L15.5 31 L12 24.6 C5.5 23.5 1 18.8 1 13.3 C1 7 7 1.5 15 1.5 Z" transform="translate(2,2)" fill="#8a8a8a"/><path d="M15 1.5 C23.5 1.5 30 7 30 13.3 C30 19.6 24 24.4 17 25 L15.5 31 L12 24.6 C5.5 23.5 1 18.8 1 13.3 C1 7 7 1.5 15 1.5 Z" fill="#fff" stroke="#222" stroke-width="0.9"/><ellipse cx="15.3" cy="6" rx="3" ry="2.2" fill="#0000ff"/><path d="M11 9.5 H17.5 V18.5 H19.5 V20 H10.5 V18.5 H12.8 V11 H11 Z" fill="#0000ff"/></svg>
<div class="r" style="left:1315px;top:316px;width:15px;height:15px;background:#d9d9d9;border-style:solid;border-width:1px 2px 2px 1px;border-color:#fff #828282 #828282 #fff"></div>
<svg class="r" style="left:1318px;top:319px;" width="9" height="9" viewBox="0 0 9 9"><path d="M1 1 L8 8 M8 1 L1 8" stroke="#000" stroke-width="1.3"/></svg>
<div class="t" style="right:148px;top:349.65px;font-family:'Liberation Sans',sans-serif;font-size:14px;line-height:14px;color:#000;font-weight:400;">&lt;tool&gt; MOD 100 = 2.000000</div>
<svg class="r" style="left:1281px;top:342px;" width="34" height="34" viewBox="0 0 34 34"><path d="M15 1.5 C23.5 1.5 30 7 30 13.3 C30 19.6 24 24.4 17 25 L15.5 31 L12 24.6 C5.5 23.5 1 18.8 1 13.3 C1 7 7 1.5 15 1.5 Z" transform="translate(2,2)" fill="#8a8a8a"/><path d="M15 1.5 C23.5 1.5 30 7 30 13.3 C30 19.6 24 24.4 17 25 L15.5 31 L12 24.6 C5.5 23.5 1 18.8 1 13.3 C1 7 7 1.5 15 1.5 Z" fill="#fff" stroke="#222" stroke-width="0.9"/><ellipse cx="15.3" cy="6" rx="3" ry="2.2" fill="#0000ff"/><path d="M11 9.5 H17.5 V18.5 H19.5 V20 H10.5 V18.5 H12.8 V11 H11 Z" fill="#0000ff"/></svg>
<div class="r" style="left:1315px;top:350px;width:15px;height:15px;background:#d9d9d9;border-style:solid;border-width:1px 2px 2px 1px;border-color:#fff #828282 #828282 #fff"></div>
<svg class="r" style="left:1318px;top:353px;" width="9" height="9" viewBox="0 0 9 9"><path d="M1 1 L8 8 M8 1 L1 8" stroke="#000" stroke-width="1.3"/></svg>
<div class="t" style="right:148px;top:383.65px;font-family:'Liberation Sans',sans-serif;font-size:14px;line-height:14px;color:#000;font-weight:400;">&lt;wear&gt;  = 10100.000000</div>
<svg class="r" style="left:1281px;top:376px;" width="34" height="34" viewBox="0 0 34 34"><path d="M15 1.5 C23.5 1.5 30 7 30 13.3 C30 19.6 24 24.4 17 25 L15.5 31 L12 24.6 C5.5 23.5 1 18.8 1 13.3 C1 7 7 1.5 15 1.5 Z" transform="translate(2,2)" fill="#8a8a8a"/><path d="M15 1.5 C23.5 1.5 30 7 30 13.3 C30 19.6 24 24.4 17 25 L15.5 31 L12 24.6 C5.5 23.5 1 18.8 1 13.3 C1 7 7 1.5 15 1.5 Z" fill="#fff" stroke="#222" stroke-width="0.9"/><ellipse cx="15.3" cy="6" rx="3" ry="2.2" fill="#0000ff"/><path d="M11 9.5 H17.5 V18.5 H19.5 V20 H10.5 V18.5 H12.8 V11 H11 Z" fill="#0000ff"/></svg>
<div class="r" style="left:1315px;top:384px;width:15px;height:15px;background:#d9d9d9;border-style:solid;border-width:1px 2px 2px 1px;border-color:#fff #828282 #828282 #fff"></div>
<svg class="r" style="left:1318px;top:387px;" width="9" height="9" viewBox="0 0 9 9"><path d="M1 1 L8 8 M8 1 L1 8" stroke="#000" stroke-width="1.3"/></svg>
<div class="t" style="right:148px;top:417.65px;font-family:'Liberation Sans',sans-serif;font-size:14px;line-height:14px;color:#000;font-weight:400;letter-spacing:0.15px">tool = 2.000000 wear = 10100.000000</div>
<svg class="r" style="left:1281px;top:410px;" width="34" height="34" viewBox="0 0 34 34"><path d="M15 1.5 C23.5 1.5 30 7 30 13.3 C30 19.6 24 24.4 17 25 L15.5 31 L12 24.6 C5.5 23.5 1 18.8 1 13.3 C1 7 7 1.5 15 1.5 Z" transform="translate(2,2)" fill="#8a8a8a"/><path d="M15 1.5 C23.5 1.5 30 7 30 13.3 C30 19.6 24 24.4 17 25 L15.5 31 L12 24.6 C5.5 23.5 1 18.8 1 13.3 C1 7 7 1.5 15 1.5 Z" fill="#fff" stroke="#222" stroke-width="0.9"/><ellipse cx="15.3" cy="6" rx="3" ry="2.2" fill="#0000ff"/><path d="M11 9.5 H17.5 V18.5 H19.5 V20 H10.5 V18.5 H12.8 V11 H11 Z" fill="#0000ff"/></svg>
<div class="r" style="left:1315px;top:418px;width:15px;height:15px;background:#d9d9d9;border-style:solid;border-width:1px 2px 2px 1px;border-color:#fff #828282 #828282 #fff"></div>
<svg class="r" style="left:1318px;top:421px;" width="9" height="9" viewBox="0 0 9 9"><path d="M1 1 L8 8 M8 1 L1 8" stroke="#000" stroke-width="1.3"/></svg>
<div class="t" style="right:148px;top:451.65px;font-family:'Liberation Sans',sans-serif;font-size:14px;line-height:14px;color:#000;font-weight:400;">Tool requested = 10001.000000</div>
<svg class="r" style="left:1281px;top:444px;" width="34" height="34" viewBox="0 0 34 34"><path d="M15 1.5 C23.5 1.5 30 7 30 13.3 C30 19.6 24 24.4 17 25 L15.5 31 L12 24.6 C5.5 23.5 1 18.8 1 13.3 C1 7 7 1.5 15 1.5 Z" transform="translate(2,2)" fill="#8a8a8a"/><path d="M15 1.5 C23.5 1.5 30 7 30 13.3 C30 19.6 24 24.4 17 25 L15.5 31 L12 24.6 C5.5 23.5 1 18.8 1 13.3 C1 7 7 1.5 15 1.5 Z" fill="#fff" stroke="#222" stroke-width="0.9"/><ellipse cx="15.3" cy="6" rx="3" ry="2.2" fill="#0000ff"/><path d="M11 9.5 H17.5 V18.5 H19.5 V20 H10.5 V18.5 H12.8 V11 H11 Z" fill="#0000ff"/></svg>
<div class="r" style="left:1315px;top:452px;width:15px;height:15px;background:#d9d9d9;border-style:solid;border-width:1px 2px 2px 1px;border-color:#fff #828282 #828282 #fff"></div>
<svg class="r" style="left:1318px;top:455px;" width="9" height="9" viewBox="0 0 9 9"><path d="M1 1 L8 8 M8 1 L1 8" stroke="#000" stroke-width="1.3"/></svg>
<div class="t" style="right:148px;top:485.65px;font-family:'Liberation Sans',sans-serif;font-size:14px;line-height:14px;color:#000;font-weight:400;">&lt;tool&gt; MOD 100 = 1.000000</div>
<svg class="r" style="left:1281px;top:478px;" width="34" height="34" viewBox="0 0 34 34"><path d="M15 1.5 C23.5 1.5 30 7 30 13.3 C30 19.6 24 24.4 17 25 L15.5 31 L12 24.6 C5.5 23.5 1 18.8 1 13.3 C1 7 7 1.5 15 1.5 Z" transform="translate(2,2)" fill="#8a8a8a"/><path d="M15 1.5 C23.5 1.5 30 7 30 13.3 C30 19.6 24 24.4 17 25 L15.5 31 L12 24.6 C5.5 23.5 1 18.8 1 13.3 C1 7 7 1.5 15 1.5 Z" fill="#fff" stroke="#222" stroke-width="0.9"/><ellipse cx="15.3" cy="6" rx="3" ry="2.2" fill="#0000ff"/><path d="M11 9.5 H17.5 V18.5 H19.5 V20 H10.5 V18.5 H12.8 V11 H11 Z" fill="#0000ff"/></svg>
<div class="r" style="left:1315px;top:486px;width:15px;height:15px;background:#d9d9d9;border-style:solid;border-width:1px 2px 2px 1px;border-color:#fff #828282 #828282 #fff"></div>
<svg class="r" style="left:1318px;top:489px;" width="9" height="9" viewBox="0 0 9 9"><path d="M1 1 L8 8 M8 1 L1 8" stroke="#000" stroke-width="1.3"/></svg>
<div class="t" style="right:148px;top:519.65px;font-family:'Liberation Sans',sans-serif;font-size:14px;line-height:14px;color:#000;font-weight:400;">&lt;wear&gt;  = 10100.000000</div>
<svg class="r" style="left:1281px;top:512px;" width="34" height="34" viewBox="0 0 34 34"><path d="M15 1.5 C23.5 1.5 30 7 30 13.3 C30 19.6 24 24.4 17 25 L15.5 31 L12 24.6 C5.5 23.5 1 18.8 1 13.3 C1 7 7 1.5 15 1.5 Z" transform="translate(2,2)" fill="#8a8a8a"/><path d="M15 1.5 C23.5 1.5 30 7 30 13.3 C30 19.6 24 24.4 17 25 L15.5 31 L12 24.6 C5.5 23.5 1 18.8 1 13.3 C1 7 7 1.5 15 1.5 Z" fill="#fff" stroke="#222" stroke-width="0.9"/><ellipse cx="15.3" cy="6" rx="3" ry="2.2" fill="#0000ff"/><path d="M11 9.5 H17.5 V18.5 H19.5 V20 H10.5 V18.5 H12.8 V11 H11 Z" fill="#0000ff"/></svg>
<div class="r" style="left:1315px;top:520px;width:15px;height:15px;background:#d9d9d9;border-style:solid;border-width:1px 2px 2px 1px;border-color:#fff #828282 #828282 #fff"></div>
<svg class="r" style="left:1318px;top:523px;" width="9" height="9" viewBox="0 0 9 9"><path d="M1 1 L8 8 M8 1 L1 8" stroke="#000" stroke-width="1.3"/></svg>
<div class="t" style="right:148px;top:553.65px;font-family:'Liberation Sans',sans-serif;font-size:14px;line-height:14px;color:#000;font-weight:400;letter-spacing:0.15px">tool = 1.000000 wear = 10100.000000</div>
<svg class="r" style="left:1281px;top:546px;" width="34" height="34" viewBox="0 0 34 34"><path d="M15 1.5 C23.5 1.5 30 7 30 13.3 C30 19.6 24 24.4 17 25 L15.5 31 L12 24.6 C5.5 23.5 1 18.8 1 13.3 C1 7 7 1.5 15 1.5 Z" transform="translate(2,2)" fill="#8a8a8a"/><path d="M15 1.5 C23.5 1.5 30 7 30 13.3 C30 19.6 24 24.4 17 25 L15.5 31 L12 24.6 C5.5 23.5 1 18.8 1 13.3 C1 7 7 1.5 15 1.5 Z" fill="#fff" stroke="#222" stroke-width="0.9"/><ellipse cx="15.3" cy="6" rx="3" ry="2.2" fill="#0000ff"/><path d="M11 9.5 H17.5 V18.5 H19.5 V20 H10.5 V18.5 H12.8 V11 H11 Z" fill="#0000ff"/></svg>
<div class="r" style="left:1315px;top:554px;width:15px;height:15px;background:#d9d9d9;border-style:solid;border-width:1px 2px 2px 1px;border-color:#fff #828282 #828282 #fff"></div>
<svg class="r" style="left:1318px;top:557px;" width="9" height="9" viewBox="0 0 9 9"><path d="M1 1 L8 8 M8 1 L1 8" stroke="#000" stroke-width="1.3"/></svg>
<div class="t" style="left:1016.5px;top:581.15px;font-family:'Liberation Sans',sans-serif;font-size:14px;line-height:14px;color:#000;font-weight:400;">Tool=1.000000  OffsetX=0.100000</div>
<div class="t" style="left:1012.5px;top:596.15px;font-family:'Liberation Sans',sans-serif;font-size:14px;line-height:14px;color:#000;font-weight:400;">OffsetZ=0.330000 ToolDiameter=0.000000</div>
<div class="t" style="left:1012.5px;top:611.15px;font-family:'Liberation Sans',sans-serif;font-size:14px;line-height:14px;color:#000;font-weight:400;">Orient = 1.000000</div>
<svg class="r" style="left:1281px;top:588px;" width="34" height="34" viewBox="0 0 34 34"><path d="M15 1.5 C23.5 1.5 30 7 30 13.3 C30 19.6 24 24.4 17 25 L15.5 31 L12 24.6 C5.5 23.5 1 18.8 1 13.3 C1 7 7 1.5 15 1.5 Z" transform="translate(2,2)" fill="#8a8a8a"/><path d="M15 1.5 C23.5 1.5 30 7 30 13.3 C30 19.6 24 24.4 17 25 L15.5 31 L12 24.6 C5.5 23.5 1 18.8 1 13.3 C1 7 7 1.5 15 1.5 Z" fill="#fff" stroke="#222" stroke-width="0.9"/><ellipse cx="15.3" cy="6" rx="3" ry="2.2" fill="#0000ff"/><path d="M11 9.5 H17.5 V18.5 H19.5 V20 H10.5 V18.5 H12.8 V11 H11 Z" fill="#0000ff"/></svg>
<div class="r" style="left:1315px;top:596px;width:15px;height:15px;background:#d9d9d9;border-style:solid;border-width:1px 2px 2px 1px;border-color:#fff #828282 #828282 #fff"></div>
<svg class="r" style="left:1318px;top:599px;" width="9" height="9" viewBox="0 0 9 9"><path d="M1 1 L8 8 M8 1 L1 8" stroke="#000" stroke-width="1.3"/></svg>
<svg class="r" style="left:1205px;top:606px;" width="34" height="8" viewBox="0 0 34 8"><path d="M2.5 3 C10 2.5 18 2.5 24 3 C27 3.5 29 4.5 30.5 5.5" stroke="#e42a63" stroke-width="2" stroke-linecap="round" fill="none"/></svg>
<svg class="r" style="left:1034px;top:619px;" width="56" height="9" viewBox="0 0 56 9"><path d="M2.5 6 C8 4 15 3 21 3.5 C26 4 28 6.5 33 6.5 C40 6.5 46 6.5 52.5 6.5" stroke="#e42a63" stroke-width="2" stroke-linecap="round" fill="none"/></svg>
<div class="r" style="left:549px;top:627px;width:118px;height:21px;background:#d9d9d9;border-style:solid;border-width:2px 1px 1px 2px;border-color:#828282 #fff #fff #828282"></div>
<div class="t" style="left:552.5px;top:630.57px;font-family:'Liberation Sans',sans-serif;font-size:13.5px;line-height:13.5px;color:#000;font-weight:400;">ВКЛ</div>
<div class="r" style="left:667px;top:627px;width:246px;height:21px;background:#d9d9d9;border-style:solid;border-width:2px 1px 1px 2px;border-color:#828282 #fff #fff #828282;overflow:hidden"></div>
<div class="t" style="left:670px;top:630.32px;font-family:'Liberation Sans',sans-serif;font-size:13.8px;line-height:13.8px;color:#000;font-weight:400;">Инструмент 1, zo 0.4, xo 0.1, диаметр</div>
<div class="r" style="left:913px;top:627px;width:206px;height:21px;background:#d9d9d9;border-style:solid;border-width:2px 1px 1px 2px;border-color:#828282 #fff #fff #828282;overflow:hidden"><div class="t" style="left:2px;top:2px;font-family:'Liberation Sans',sans-serif;font-size:13.8px;line-height:13.8px">Позиция: Относительная Настоящая</div></div>
</body></html>
